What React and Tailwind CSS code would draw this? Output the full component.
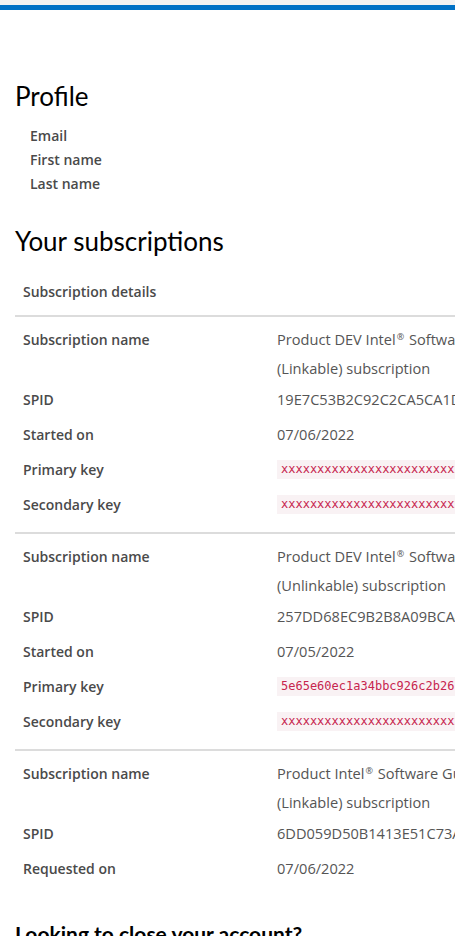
const subscriptions = [
  {
    product: 'Product DEV Intel',
    rest: ' Software Guard Extensions Attestation Service',
    kind: '(Linkable) subscription',
    spid: '19E7C53B2C92C2CA5CA1D6F0A2B4E7C1',
    dateLabel: 'Started on',
    date: '07/06/2022',
    primary: 'xxxxxxxxxxxxxxxxxxxxxxxxxxxxxxxx',
    secondary: 'xxxxxxxxxxxxxxxxxxxxxxxxxxxxxxxx',
  },
  {
    product: 'Product DEV Intel',
    rest: ' Software Guard Extensions Attestation Service',
    kind: '(Unlinkable) subscription',
    spid: '257DD68EC9B2B8A09BCA4F1E6D2C3B90',
    dateLabel: 'Started on',
    date: '07/05/2022',
    primary: '5e65e60ec1a34bbc926c2b26f0e1d7a4',
    secondary: 'xxxxxxxxxxxxxxxxxxxxxxxxxxxxxxxx',
  },
  {
    product: 'Product Intel',
    rest: ' Software Guard Extensions Attestation Service',
    kind: '(Linkable) subscription',
    spid: '6DD059D50B1413E51C73A8F2B0D6E4C9',
    dateLabel: 'Requested on',
    date: '07/06/2022',
  },
]

function Row({ label, children, tall }) {
  return (
    <div className={`grid grid-cols-[262px_1fr] ${tall ? 'h-[60px]' : 'h-[35px]'}`}>
      <div className="pl-2 leading-[35px] text-[14px] font-semibold text-[#4a4a4a]">{label}</div>
      <div className="text-[14.6px] text-[#555] whitespace-nowrap">{children}</div>
    </div>
  )
}

function Key({ value }) {
  return (
    <div className="h-[35px] flex items-center">
      <code className="bg-[#f9f2f4] text-[#c7254e] text-[12px] leading-[19px] px-1 font-['DejaVu_Sans_Mono',monospace]">{value}</code>
    </div>
  )
}

export default function App() {
  return (
    <div className="w-[455px] overflow-hidden bg-white font-['Open_Sans',sans-serif]">
      <div className="h-[5px] bg-[#f2f2f2]" />
      <div className="h-[5px] bg-[#0071c5]" />

      <div className="px-[15px] w-[760px]">
        <h1 className="mt-[69px] text-[26px] leading-[34px] text-black font-['Lato',sans-serif]">Profile</h1>
        <div className="pl-[15px] mt-[11px] text-[14px] font-semibold text-[#4a4a4a] leading-[24px]">
          <div>Email</div>
          <div>First name</div>
          <div>Last name</div>
        </div>

        <h2 className="mt-[28px] text-[26px] leading-[34px] text-black font-['Lato',sans-serif]">Your subscriptions</h2>
        <div className="mt-[16px] pb-[6px] pl-2 leading-[35px] text-[14px] font-semibold text-[#4a4a4a]">Subscription details</div>

        {subscriptions.map((s, i) => (
          <div key={i} className="border-t-2 border-[#dcdcdc] pt-[5px] pb-[10px]">
            <Row label="Subscription name" tall>
              <div className="mt-[3px] leading-[29px]">
                <div className="h-[29px]">
                  {s.product}
                  <span className="relative -top-[5px] text-[9px] leading-none mx-px">®</span>
                  {s.rest}
                </div>
                <div>{s.kind}</div>
              </div>
            </Row>
            <Row label="SPID">
              <div className="leading-[35px]">{s.spid}</div>
            </Row>
            <Row label={s.dateLabel}>
              <div className="leading-[35px]">{s.date}</div>
            </Row>
            {s.primary && (
              <Row label="Primary key">
                <Key value={s.primary} />
              </Row>
            )}
            {s.secondary && (
              <Row label="Secondary key">
                <Key value={s.secondary} />
              </Row>
            )}
          </div>
        ))}

        <h3 className="mt-[24px] text-[21px] font-bold text-black leading-[28px] font-['Lato',sans-serif]">Looking to close your account?</h3>
        <p className="mt-2 text-[14px] text-[#555]">You can request to delete your account and all associated data.</p>
      </div>
    </div>
  )
}
